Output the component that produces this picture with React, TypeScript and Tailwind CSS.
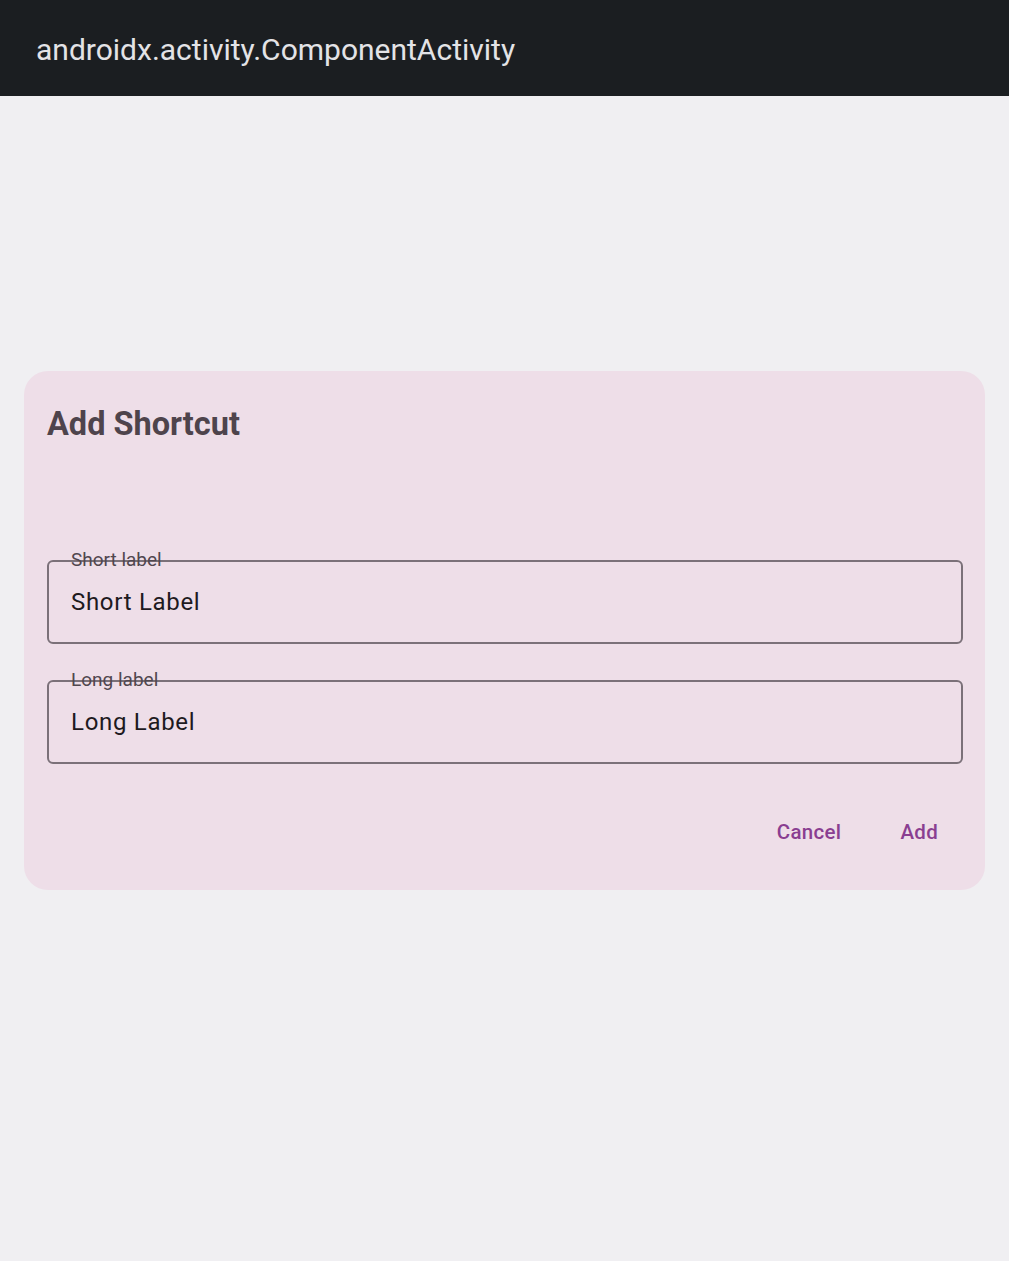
import React from 'react';

const OutlinedField: React.FC<{ label: string; value: string }> = ({ label, value }) => (
  <div className="relative">
    <div className="h-[84px] rounded-[6px] border-2 border-[#7b7179] flex items-center px-[22px]">
      <span className="text-[24px] tracking-[0.7px] text-[#1e1a1e]">{value}</span>
    </div>
    {/* label sits right on the outline */}
    <span className="absolute left-[24px] top-[-12px] text-[19px] leading-[24px] text-[#51474f]">{label}</span>
  </div>
);

export default function App() {
  return (
    <div className="min-h-[1261px] bg-[#f0eff2] flex flex-col" style={{ fontFamily: 'Roboto, "Noto Sans", sans-serif' }}>
      {/* App bar */}
      <div className="h-[96px] bg-[#1b1e21] flex items-center px-[36px] pt-[4px]">
        <span className="text-[30px] leading-[36px] text-[#e3e3e6]">androidx.activity.ComponentActivity</span>
      </div>

      {/* Dialog */}
      <div className="px-[24px] pt-[275px]">
        <div className="bg-[#eedee8] rounded-[24px] h-[519px] pl-[23px] pr-[22px] pt-[29px] flex flex-col">
          <h2 className="text-[32.5px] font-bold leading-[48px] text-[#4e444c]">Add Shortcut</h2>

          <div className="mt-[112px] flex flex-col gap-[36px]">
            <OutlinedField label="Short label" value="Short Label" />
            <OutlinedField label="Long label" value="Long Label" />
          </div>

          <div className="flex justify-end gap-[59px] mt-[53px] pr-[25px]">
            <button className="text-[20.5px] font-medium text-[#8a3e91] tracking-[0.3px]">Cancel</button>
            <button className="text-[20.5px] font-medium text-[#8a3e91] tracking-[0.3px]">Add</button>
          </div>
        </div>
      </div>
    </div>
  );
}
